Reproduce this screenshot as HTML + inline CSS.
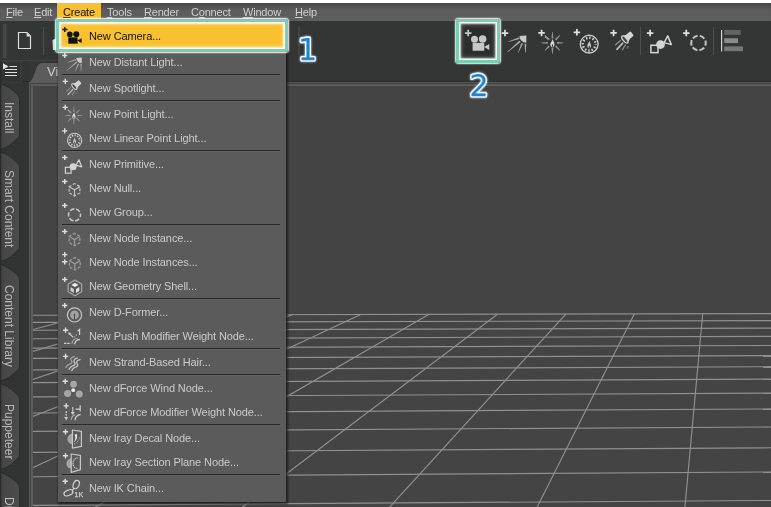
<!DOCTYPE html>
<html><head><meta charset="utf-8"><title>Create menu</title>
<style>
html,body{margin:0;padding:0;}
body{width:771px;height:507px;overflow:hidden;position:relative;background:#444444;font-family:"Liberation Sans",Arial,sans-serif;font-size:11px;}
div{position:absolute;box-sizing:border-box;}
svg{position:absolute;left:0;top:0;}
#topstrip{left:0;top:0;width:771px;height:3px;background:#fff;}
#menubar{left:0;top:3px;width:771px;height:18px;background:linear-gradient(#474747,#5c5c5c 40%,#5e5e5e);}
.mb{top:5px;height:14px;line-height:14px;color:#cfcfcf;white-space:nowrap;letter-spacing:-0.2px;}
.mb u{text-decoration:underline;text-underline-offset:1px;}
#createhl{left:57px;top:3px;width:44px;height:18px;background:#f9c12f;}
#toolbar{left:0;top:21px;width:771px;height:60px;background:#343636;}
#tbline1{left:0;top:81px;width:771px;height:1px;background:#2b2c2c;}
#tbline2{left:29px;top:82px;width:771px;height:1px;background:#585858;}
#tbline3{left:30px;top:83px;width:771px;height:1px;background:#404040;}
#leftstrip{left:0;top:61px;width:29px;height:446px;background:#323333;}
#popup{left:58px;top:21px;width:227.5px;height:481px;background:#5b5b5b;box-shadow:1px 1px 2px 1px rgba(20,20,20,.75);}
.mi{left:89px;width:190px;height:24px;line-height:27px;letter-spacing:-0.1px;color:#cacaca;white-space:nowrap;}
.mi.hl{color:#111;}
.sep{left:62px;width:218px;height:2px;margin-top:1px;background:linear-gradient(#272727 50%,#626262 50%);}
#hl{left:60px;top:23px;width:224px;height:25px;background:#f9c12f;}
.gbox{border:3.7px solid #76d0b1;border-radius:2.5px;box-shadow:0 0 1.6px 0.9px #fff, inset 0 0 0 1.3px rgba(255,255,255,.92), inset 0 0 2px 2px rgba(255,255,255,.7), inset 0 0 5px 2px rgba(255,255,255,.28);}
.vt{left:16px;height:14px;line-height:14px;font-size:12px;color:#b8b8b8;white-space:nowrap;transform-origin:0 0;transform:rotate(90deg);}
</style></head><body><div id="root" style="left:0;top:0;width:771px;height:507px;will-change:transform">
<div id="topstrip"></div>
<div id="menubar"></div>
<div id="createhl"></div>
<div class="mb" style="left:6px"><u>F</u>ile</div>
<div class="mb" style="left:34px"><u>E</u>dit</div>
<div class="mb" style="left:63px;color:#111"><u>C</u>reate</div>
<div class="mb" style="left:107px"><u>T</u>ools</div>
<div class="mb" style="left:144px"><u>R</u>ender</div>
<div class="mb" style="left:191px">C<u>o</u>nnect</div>
<div class="mb" style="left:243px"><u>W</u>indow</div>
<div class="mb" style="left:295px"><u>H</u>elp</div>
<div id="toolbar"></div>
<div id="leftstrip"></div>
<div id="tbline1"></div><div id="tbline2"></div><div id="tbline3"></div>
<svg width="771" height="507" viewBox="0 0 771 507">
<defs>
<clipPath id="vp"><rect x="33" y="86" width="738" height="421"/></clipPath>
<linearGradient id="tabg" x1="0" x2="1" y1="0" y2="0"><stop offset="0" stop-color="#3c3c3c"/><stop offset="0.15" stop-color="#464646"/><stop offset="1" stop-color="#4c4c4c"/></linearGradient>
</defs>
<!-- viewport pane borders -->
<rect x="29" y="82" width="1" height="507" fill="#585858"/>
<rect x="30" y="83" width="1" height="507" fill="#444"/>
<rect x="31" y="84" width="2" height="507" fill="#5b5b5b"/>
<rect x="31" y="84" width="771" height="2" fill="#5b5b5b"/>
<g clip-path="url(#vp)" stroke="#909090" stroke-width="1.15" fill="none"><line x1="20.00" y1="315.25" x2="780.00" y2="313.60"/><line x1="20.00" y1="322.43" x2="780.00" y2="320.54"/><line x1="20.00" y1="330.25" x2="780.00" y2="328.10"/><line x1="20.00" y1="338.80" x2="780.00" y2="336.38"/><line x1="20.00" y1="348.17" x2="780.00" y2="345.47"/><line x1="20.00" y1="358.50" x2="780.00" y2="355.52"/><line x1="20.00" y1="369.95" x2="780.00" y2="366.66"/><line x1="20.00" y1="382.70" x2="780.00" y2="379.11"/><line x1="20.00" y1="396.98" x2="780.00" y2="393.09"/><line x1="20.00" y1="413.11" x2="780.00" y2="408.90"/><line x1="20.00" y1="431.44" x2="780.00" y2="426.95"/><line x1="20.00" y1="452.47" x2="780.00" y2="447.72"/><line x1="20.00" y1="476.84" x2="780.00" y2="471.91"/><line x1="20.00" y1="505.43" x2="780.00" y2="500.40"/><line x1="18.70" y1="315.25" x2="-834.85" y2="520.00"/><line x1="87.10" y1="315.10" x2="-684.21" y2="520.00"/><line x1="155.50" y1="314.95" x2="-533.29" y2="520.00"/><line x1="223.90" y1="314.80" x2="-382.11" y2="520.00"/><line x1="292.30" y1="314.66" x2="-230.66" y2="520.00"/><line x1="360.70" y1="314.51" x2="-78.94" y2="520.00"/><line x1="429.10" y1="314.36" x2="73.05" y2="520.00"/><line x1="497.50" y1="314.21" x2="225.31" y2="520.00"/><line x1="565.90" y1="314.06" x2="377.84" y2="520.00"/><line x1="634.30" y1="313.91" x2="530.65" y2="520.00"/><line x1="702.70" y1="313.76" x2="683.72" y2="520.00"/><line x1="771.10" y1="313.62" x2="837.07" y2="520.00"/><line x1="839.50" y1="313.47" x2="990.70" y2="520.00"/></g>
<!-- toolbar items -->
<rect x="3" y="24" width="3.5" height="34" fill="#454646"/>
<path d="M18.5 32.5H27L30.5 36V48.5H18.5Z" fill="none" stroke="#dcdcdc" stroke-width="1.2"/><path d="M26.6 32.6V36.4H30.4Z" fill="#dcdcdc"/>
<rect x="43" y="27" width="1" height="28" fill="#4e4f4f"/>
<path d="M52.5 40L56 38.6V50H53Z" fill="#d8d8d8"/>
<rect x="298.5" y="27" width="1" height="28" fill="#4e4f4f"/>
<rect x="640" y="27" width="1" height="28" fill="#4e4f4f"/>
<rect x="713" y="27" width="1" height="28" fill="#4e4f4f"/>
<rect x="721" y="30" width="1.2" height="21.5" fill="#d0d0d0"/>
<rect x="724.2" y="30" width="16.4" height="4.8" fill="#646464"/>
<rect x="724.2" y="38.3" width="13.8" height="4.8" fill="#8a8a8a"/>
<rect x="724.2" y="46.4" width="18.8" height="4.8" fill="#777"/>
<rect x="460" y="23" width="37" height="37" fill="#2c2d2d"/>
<g transform="translate(463.5 24.9) scale(1.25)"><path d="M1.15 6.5H6.35M3.75 3.9V9.1" stroke="#c6c6c6" stroke-width="1.4" fill="none"/><g fill="#c6c6c6"><circle cx="8.8" cy="11.4" r="2.8"/><circle cx="15.3" cy="11.3" r="3"/><rect x="7.3" y="14.4" width="9.3" height="6.3"/><path d="M16.4 17.6L20.6 15.3V20.1Z"/></g></g><g transform="translate(500.3 24.9) scale(1.25)"><path d="M1.15 6.5H6.35M3.75 3.9V9.1" stroke="#e0e0e0" stroke-width="1.4" fill="none"/><path d="M15.3 8.9L20.8 8.5V14.2A5.4 5.4 0 0 1 15.3 8.9Z" fill="#c8c8c8"/><path d="M14.97 9.89L15.43 11.31L6.46 13.68L6.34 13.32ZM15.28 12.39L16.32 13.61L5.83 21.85L5.57 21.55ZM16.81 14.41L18.19 14.99L14.47 22.37L14.13 22.23ZM19.35 15.00L20.85 15.00L20.29 22.30L19.91 22.30Z" fill="#a6a6a6"/></g><g transform="translate(536.3 24.9) scale(1.25)"><path d="M1.6 6.4H6.800000000000001M4.2 3.8000000000000003V9.0" stroke="#e0e0e0" stroke-width="1.4" fill="none"/><path d="M7 9.2L9.4 11.4" stroke="#c8c8c8" stroke-width="1.1" stroke-dasharray="1.2 0.7"/><path d="M16.50 15.15L16.50 13.65L21.60 14.15L21.60 14.65ZM14.92 17.48L15.98 16.42L19.16 20.30L18.80 20.66ZM12.15 18.00L13.65 18.00L13.15 23.10L12.65 23.10ZM9.82 16.42L10.88 17.48L7.00 20.66L6.64 20.30ZM9.30 13.65L9.30 15.15L4.20 14.65L4.20 14.15ZM10.88 11.32L9.82 12.38L6.64 8.50L7.00 8.14ZM13.65 10.80L12.15 10.80L12.65 5.70L13.15 5.70ZM15.98 12.38L14.92 11.32L18.80 8.14L19.16 8.50Z" fill="#959595"/><path transform="translate(12.9 14.5) scale(0.76 0.95)" d="M0.3 -3.4C0.6 -1.8 2.2 -0.6 2.2 1.2C2.2 2.6 1.2 3.4 0 3.4C-1.3 3.4 -2.2 2.5 -2.2 1.2C-2.2 -0.6 -0.2 -1.6 0.3 -3.4ZM0.1 0.6C-0.5 1.4 -0.7 1.9 -0.7 2.4C-0.7 2.9 -0.3 3.2 0.1 3.2C0.6 3.2 0.9 2.8 0.9 2.4C0.9 1.8 0.4 1.4 0.1 0.6Z" fill="#d8d8d8" fill-rule="evenodd"/></g><g transform="translate(572.2 24.9) scale(1.25)"><path d="M1.15 5.9H6.35M3.75 3.3000000000000003V8.5" stroke="#e0e0e0" stroke-width="1.4" fill="none"/><circle cx="13.6" cy="15.4" r="7.1" fill="none" stroke="#c8c8c8" stroke-width="1.1"/><circle cx="13.6" cy="15.4" r="5.1" fill="none" stroke="#d0d0d0" stroke-width="1.9" stroke-dasharray="1.2 1.47" stroke-dashoffset="0.6"/><path transform="translate(13.6 15.700000000000001) scale(0.7040000000000001 0.88)" d="M0.3 -3.4C0.6 -1.8 2.2 -0.6 2.2 1.2C2.2 2.6 1.2 3.4 0 3.4C-1.3 3.4 -2.2 2.5 -2.2 1.2C-2.2 -0.6 -0.2 -1.6 0.3 -3.4ZM0.1 0.6C-0.5 1.4 -0.7 1.9 -0.7 2.4C-0.7 2.9 -0.3 3.2 0.1 3.2C0.6 3.2 0.9 2.8 0.9 2.4C0.9 1.8 0.4 1.4 0.1 0.6Z" fill="#c4c4c4" fill-rule="evenodd"/></g><g transform="translate(608.2 24.9) scale(1.25)"><path d="M1.6999999999999997 6.4H6.9M4.3 3.8000000000000003V9.0" stroke="#e0e0e0" stroke-width="1.4" fill="none"/><g transform="translate(13.6 11.4) rotate(-40)"><path d="M-0.6 -4C1.4 -2.8 2.6 -2.3 3.8 -2.3H6.2Q7.2 -2.3 7.2 -1.3V1.3Q7.2 2.3 6.2 2.3H3.8C2.6 2.3 1.4 2.8 -0.6 4Z" fill="#d4d4d4"/><ellipse cx="-0.4" cy="0" rx="1.5" ry="3.5" fill="#444" stroke="#d4d4d4" stroke-width="1"/></g><g stroke-linecap="round"><path d="M9.6 12.6L5.8 16" stroke="#8a8a8a" stroke-width="1.1"/><path d="M11.6 14.6L7 19.6" stroke="#c0c0c0" stroke-width="1.3"/><path d="M13.8 16L11.4 19.8" stroke="#8a8a8a" stroke-width="1.1"/><path d="M16 17.2L15.2 18.6" stroke="#777" stroke-width="1"/></g></g><g transform="translate(645.4 24.9) scale(1.25)"><path d="M1.15 6.5H6.35M3.75 3.9V9.1" stroke="#e0e0e0" stroke-width="1.4" fill="none"/><rect x="4.4" y="16.3" width="5.7" height="5.9" fill="none" stroke="#d4d4d4" stroke-width="1.2"/><path d="M15 14.2L17.9 8.8L20.7 15.8Z" fill="none" stroke="#d4d4d4" stroke-width="1.2" stroke-linejoin="round"/><circle cx="12.1" cy="15.7" r="3.5" fill="#d4d4d4"/></g><g transform="translate(681.6 24.9) scale(1.25)"><path d="M1.15 6.5H6.35M3.75 3.9V9.1" stroke="#e0e0e0" stroke-width="1.4" fill="none"/><circle cx="13.5" cy="14.5" r="5.8" fill="none" stroke="#c4c4c4" stroke-width="1.6" stroke-dasharray="4.350 1.724" stroke-dashoffset="2.175"/></g>
<!-- tab bar row -->
<rect x="0" y="60" width="240" height="1" fill="#414242"/>
<rect x="0" y="61" width="21" height="21" fill="none" stroke="#3f4040" stroke-width="1"/>
<path d="M3 63.2L8.6 66.4L3 69.6Z" fill="#e0e0e0"/>
<path d="M9.5 66.5H17M5 69.5H17M5 72.5H17M5 75.5H17" stroke="#e0e0e0" stroke-width="1"/>
<path d="M29 83C33 80 34 74 36.5 68C38 64.5 39.5 63 43 63H240V83Z" fill="#5c5c5c"/>
<!-- left tabs -->
<path d="M0 83.5C6 85.5 11 88.5 14 91.5C17 94.5 19.5 95.5 19.5 99.5V133.7C19.5 137.7 17 138.7 14 141.7C11 144.7 6 147.7 0 149.7Z" fill="url(#tabg)" stroke="#2a2a2a" stroke-width="1"/><path d="M0 151.7C6 153.7 11 156.7 14 159.7C17 162.7 19.5 163.7 19.5 167.7V246C19.5 250 17 251 14 254C11 257 6 260 0 262Z" fill="url(#tabg)" stroke="#2a2a2a" stroke-width="1"/><path d="M0 264C6 266 11 269 14 272C17 275 19.5 276 19.5 280V365.5C19.5 369.5 17 370.5 14 373.5C11 376.5 6 379.5 0 381.5Z" fill="url(#tabg)" stroke="#2a2a2a" stroke-width="1"/><path d="M0 383.5C6 385.5 11 388.5 14 391.5C17 394.5 19.5 395.5 19.5 399.5V454C19.5 458 17 459 14 462C11 465 6 468 0 470Z" fill="url(#tabg)" stroke="#2a2a2a" stroke-width="1"/><path d="M0 472C6 474 11 477 14 480C17 483 19.5 484 19.5 488V584C19.5 588 17 589 14 592C11 595 6 598 0 600Z" fill="url(#tabg)" stroke="#2a2a2a" stroke-width="1"/>
<rect x="0" y="61" width="1.2" height="446" fill="#2a2a2a"/>
</svg>
<div style="left:47px;top:64px;font-size:13px;line-height:16px;color:#d0d0d0">Viewport</div>
<div class="vt" style="top:101.5px">Install</div><div class="vt" style="top:169.8px">Smart Content</div><div class="vt" style="top:285.3px">Content Library</div><div class="vt" style="top:404px">Puppeteer</div><div class="vt" style="top:496.5px">Draw Settings</div>
<div id="popup"></div>
<div id="hl"></div>
<div class="mi hl" style="top:23px">New Camera...</div><div class="mi" style="top:49px">New Distant Light...</div><div class="sep" style="top:73px"></div><div class="mi" style="top:75px">New Spotlight...</div><div class="sep" style="top:99px"></div><div class="mi" style="top:101px">New Point Light...</div><div class="mi" style="top:125px">New Linear Point Light...</div><div class="sep" style="top:149px"></div><div class="mi" style="top:151px">New Primitive...</div><div class="mi" style="top:175px">New Null...</div><div class="mi" style="top:199px">New Group...</div><div class="sep" style="top:223px"></div><div class="mi" style="top:225px">New Node Instance...</div><div class="mi" style="top:249px">New Node Instances...</div><div class="mi" style="top:273px">New Geometry Shell...</div><div class="sep" style="top:297px"></div><div class="mi" style="top:299px">New D-Former...</div><div class="mi" style="top:323px">New Push Modifier Weight Node...</div><div class="sep" style="top:347px"></div><div class="mi" style="top:349px">New Strand-Based Hair...</div><div class="sep" style="top:373px"></div><div class="mi" style="top:375px">New dForce Wind Node...</div><div class="mi" style="top:399px">New dForce Modifier Weight Node...</div><div class="sep" style="top:423px"></div><div class="mi" style="top:425px">New Iray Decal Node...</div><div class="mi" style="top:449px">New Iray Section Plane Node...</div><div class="sep" style="top:473px"></div><div class="mi" style="top:475px">New IK Chain...</div>
<svg width="771" height="507" viewBox="0 0 771 507">
<g transform="translate(61 23)"><path d="M1.15 6.5H6.35M3.75 3.9V9.1" stroke="#111" stroke-width="1.4" fill="none"/><g fill="#111"><circle cx="8.8" cy="11.4" r="2.8"/><circle cx="15.3" cy="11.3" r="3"/><rect x="7.3" y="14.4" width="9.3" height="6.3"/><path d="M16.4 17.6L20.6 15.3V20.1Z"/></g></g><g transform="translate(61 49)"><path d="M1.15 6.5H6.35M3.75 3.9V9.1" stroke="#e0e0e0" stroke-width="1.4" fill="none"/><path d="M15.3 8.9L20.8 8.5V14.2A5.4 5.4 0 0 1 15.3 8.9Z" fill="#c8c8c8"/><path d="M14.97 9.89L15.43 11.31L6.46 13.68L6.34 13.32ZM15.28 12.39L16.32 13.61L5.83 21.85L5.57 21.55ZM16.81 14.41L18.19 14.99L14.47 22.37L14.13 22.23ZM19.35 15.00L20.85 15.00L20.29 22.30L19.91 22.30Z" fill="#a6a6a6"/></g><g transform="translate(61 75)"><path d="M1.6999999999999997 6.4H6.9M4.3 3.8000000000000003V9.0" stroke="#e0e0e0" stroke-width="1.4" fill="none"/><g transform="translate(13.6 11.4) rotate(-40)"><path d="M-0.6 -4C1.4 -2.8 2.6 -2.3 3.8 -2.3H6.2Q7.2 -2.3 7.2 -1.3V1.3Q7.2 2.3 6.2 2.3H3.8C2.6 2.3 1.4 2.8 -0.6 4Z" fill="#d4d4d4"/><ellipse cx="-0.4" cy="0" rx="1.5" ry="3.5" fill="#444" stroke="#d4d4d4" stroke-width="1"/></g><g stroke-linecap="round"><path d="M9.6 12.6L5.8 16" stroke="#8a8a8a" stroke-width="1.1"/><path d="M11.6 14.6L7 19.6" stroke="#c0c0c0" stroke-width="1.3"/><path d="M13.8 16L11.4 19.8" stroke="#8a8a8a" stroke-width="1.1"/><path d="M16 17.2L15.2 18.6" stroke="#777" stroke-width="1"/></g></g><g transform="translate(61 101)"><path d="M1.6 6.4H6.800000000000001M4.2 3.8000000000000003V9.0" stroke="#e0e0e0" stroke-width="1.4" fill="none"/><path d="M7 9.2L9.4 11.4" stroke="#c8c8c8" stroke-width="1.1" stroke-dasharray="1.2 0.7"/><path d="M16.50 15.15L16.50 13.65L21.60 14.15L21.60 14.65ZM14.92 17.48L15.98 16.42L19.16 20.30L18.80 20.66ZM12.15 18.00L13.65 18.00L13.15 23.10L12.65 23.10ZM9.82 16.42L10.88 17.48L7.00 20.66L6.64 20.30ZM9.30 13.65L9.30 15.15L4.20 14.65L4.20 14.15ZM10.88 11.32L9.82 12.38L6.64 8.50L7.00 8.14ZM13.65 10.80L12.15 10.80L12.65 5.70L13.15 5.70ZM15.98 12.38L14.92 11.32L18.80 8.14L19.16 8.50Z" fill="#959595"/><path transform="translate(12.9 14.5) scale(0.76 0.95)" d="M0.3 -3.4C0.6 -1.8 2.2 -0.6 2.2 1.2C2.2 2.6 1.2 3.4 0 3.4C-1.3 3.4 -2.2 2.5 -2.2 1.2C-2.2 -0.6 -0.2 -1.6 0.3 -3.4ZM0.1 0.6C-0.5 1.4 -0.7 1.9 -0.7 2.4C-0.7 2.9 -0.3 3.2 0.1 3.2C0.6 3.2 0.9 2.8 0.9 2.4C0.9 1.8 0.4 1.4 0.1 0.6Z" fill="#d8d8d8" fill-rule="evenodd"/></g><g transform="translate(61 125)"><path d="M1.15 5.9H6.35M3.75 3.3000000000000003V8.5" stroke="#e0e0e0" stroke-width="1.4" fill="none"/><circle cx="13.6" cy="15.4" r="7.1" fill="none" stroke="#c8c8c8" stroke-width="1.1"/><circle cx="13.6" cy="15.4" r="5.1" fill="none" stroke="#d0d0d0" stroke-width="1.9" stroke-dasharray="1.2 1.47" stroke-dashoffset="0.6"/><path transform="translate(13.6 15.700000000000001) scale(0.7040000000000001 0.88)" d="M0.3 -3.4C0.6 -1.8 2.2 -0.6 2.2 1.2C2.2 2.6 1.2 3.4 0 3.4C-1.3 3.4 -2.2 2.5 -2.2 1.2C-2.2 -0.6 -0.2 -1.6 0.3 -3.4ZM0.1 0.6C-0.5 1.4 -0.7 1.9 -0.7 2.4C-0.7 2.9 -0.3 3.2 0.1 3.2C0.6 3.2 0.9 2.8 0.9 2.4C0.9 1.8 0.4 1.4 0.1 0.6Z" fill="#c4c4c4" fill-rule="evenodd"/></g><g transform="translate(61 151)"><path d="M1.15 6.5H6.35M3.75 3.9V9.1" stroke="#e0e0e0" stroke-width="1.4" fill="none"/><rect x="4.4" y="16.3" width="5.7" height="5.9" fill="none" stroke="#d4d4d4" stroke-width="1.2"/><path d="M15 14.2L17.9 8.8L20.7 15.8Z" fill="none" stroke="#d4d4d4" stroke-width="1.2" stroke-linejoin="round"/><circle cx="12.1" cy="15.7" r="3.5" fill="#d4d4d4"/></g><g transform="translate(61 175)"><path d="M1.15 6.5H6.35M3.75 3.9V9.1" stroke="#e0e0e0" stroke-width="1.4" fill="none"/><path d="M13.5 8.600000000000001L18.9 11.700000000000001V17.900000000000002L13.5 21.0L8.1 17.900000000000002V11.700000000000001Z" fill="none" stroke="#c4c4c4" stroke-width="1.2" stroke-dasharray="3 1.6" stroke-dashoffset="1.5"/><path d="M13.5 14.8V21.0M13.5 14.8L8.1 11.700000000000001M13.5 14.8L18.9 11.700000000000001" fill="none" stroke="#c4c4c4" stroke-width="1.2"/></g><g transform="translate(61 199)"><path d="M1.15 6.5H6.35M3.75 3.9V9.1" stroke="#e0e0e0" stroke-width="1.4" fill="none"/><circle cx="13.5" cy="15.9" r="6" fill="none" stroke="#c4c4c4" stroke-width="1.6" stroke-dasharray="4.500 1.783" stroke-dashoffset="2.250"/></g><g transform="translate(61 225)"><path d="M1.15 6.5H6.35M3.75 3.9V9.1" stroke="#e0e0e0" stroke-width="1.4" fill="none"/><path d="M13.5 8.399999999999999L18.9 11.5V17.7L13.5 20.8L8.1 17.7V11.5Z" fill="none" stroke="#969696" stroke-width="1.35" stroke-dasharray="3 1.6" stroke-dashoffset="1.5"/><path d="M13.5 14.6V20.8M13.5 14.6L8.1 11.5M13.5 14.6L18.9 11.5" fill="none" stroke="#969696" stroke-width="1.35"/></g><g transform="translate(61 249)"><path d="M1.15 5.6H6.35M3.75 2.9999999999999996V8.2" stroke="#e0e0e0" stroke-width="1.4" fill="none"/><path d="M1.15 12.8H6.35M3.75 10.200000000000001V15.4" stroke="#e0e0e0" stroke-width="1.4" fill="none"/><path d="M13.8 8.600000000000001L19.200000000000003 11.700000000000001V17.900000000000002L13.8 21.0L8.4 17.900000000000002V11.700000000000001Z" fill="none" stroke="#969696" stroke-width="1.35" stroke-dasharray="3 1.6" stroke-dashoffset="1.5"/><path d="M13.8 14.8V21.0M13.8 14.8L8.4 11.700000000000001M13.8 14.8L19.200000000000003 11.700000000000001" fill="none" stroke="#969696" stroke-width="1.35"/></g><g transform="translate(61 273)"><path d="M1.15 6.5H6.35M3.75 3.9V9.1" stroke="#e0e0e0" stroke-width="1.4" fill="none"/><path d="M13.9 7.1000000000000005L20.6 11.0V18.8L13.9 22.7L7.2 18.8V11.0Z" fill="#555" stroke="#a4a4a4" stroke-width="1.3" stroke-linejoin="round"/><path d="M13.9 9.7L17.5 11.9L13.9 14.0L10.3 11.9Z" fill="#ececec"/><path d="M9.5 14.0L12.8 16.0V19.9L9.5 17.9Z" fill="#cfcfcf"/><path d="M18.3 14.0L15.0 16.0V19.9L18.3 17.9Z" fill="#dedede"/></g><g transform="translate(61 299)"><path d="M1.15 6.5H6.35M3.75 3.9V9.1" stroke="#e0e0e0" stroke-width="1.4" fill="none"/><circle cx="13.5" cy="15.9" r="7.1" fill="none" stroke="#c4c4c4" stroke-width="1.2"/><circle cx="13.5" cy="15.9" r="4.3" fill="#a4a4a4"/><path d="M13.5 15.9V20.3" stroke="#4a4a4a" stroke-width="1.1"/><circle cx="13.5" cy="15.700000000000001" r="0.9" fill="#4a4a4a"/></g><g transform="translate(61 323)"><path d="M1.9999999999999996 7.2H7.199999999999999M4.6 4.6V9.8" stroke="#e0e0e0" stroke-width="1.4" fill="none"/><g transform="translate(0 1)"><path d="M8.4 9.6L12.2 13.4" stroke="#d0d0d0" stroke-width="1.1"/><path d="M7.2 8.2L10.2 9L8 11.2Z" fill="#d0d0d0"/><path d="M16.6 7.2L18.6 5.4V11" stroke="#d0d0d0" stroke-width="1.2" fill="none"/><path d="M13 13.4L16.6 9.8" stroke="#a8a8a8" stroke-width="1.1" stroke-dasharray="1.6 1"/><path d="M3 19.4H9.6" stroke="#d0d0d0" stroke-width="1.2" stroke-dasharray="2.4 0.8"/><path d="M11 20C11 17 13 14.6 16.6 14.2" stroke="#a8a8a8" stroke-width="1.1" fill="none"/><path d="M13.6 20.4C13.8 17.8 15.4 15.8 19 15.4" stroke="#d0d0d0" stroke-width="1.3" fill="none"/></g></g><g transform="translate(61 349)"><path d="M1.9999999999999996 7.4H7.199999999999999M4.6 4.800000000000001V10.0" stroke="#e0e0e0" stroke-width="1.4" fill="none"/><path transform="translate(4.9 7.6)" d="M8.4 0C5.4 0.6 4 2.4 5.4 4C6.8 5.6 6 7 3.8 7.6C1.6 8.2 0.8 9.4 0 11" stroke="#a8a8a8" stroke-width="1.2" fill="none" stroke-linecap="round"/><path transform="translate(8.0 9.2)" d="M8.4 0C5.4 0.6 4 2.4 5.4 4C6.8 5.6 6 7 3.8 7.6C1.6 8.2 0.8 9.4 0 11" stroke="#c8c8c8" stroke-width="1.3" fill="none" stroke-linecap="round"/><path transform="translate(10.7 10.6)" d="M8.4 0C5.4 0.6 4 2.4 5.4 4C6.8 5.6 6 7 3.8 7.6C1.6 8.2 0.8 9.4 0 11" stroke="#c8c8c8" stroke-width="1.3" fill="none" stroke-linecap="round"/></g><g transform="translate(61 375)"><path d="M1.6 6.3H6.800000000000001M4.2 3.6999999999999997V8.9" stroke="#e0e0e0" stroke-width="1.4" fill="none"/><circle cx="12.6" cy="9.2" r="3.4" fill="#a6a6a6"/><circle cx="6.6" cy="18.4" r="3.5" fill="#a6a6a6"/><circle cx="18.3" cy="19" r="3.5" fill="#a6a6a6"/><circle cx="12.2" cy="15.2" r="1.9" fill="#ececec"/></g><g transform="translate(61 399)"><path d="M2.6 6.9H7.800000000000001M5.2 4.300000000000001V9.5" stroke="#e0e0e0" stroke-width="1.4" fill="none"/><g transform="translate(0.6 0.9)"><path d="M4.6 11V17.6" stroke="#d0d0d0" stroke-width="1.2" stroke-dasharray="2 0.9"/><path d="M2.6 17L4.6 20.4L6.6 17Z" fill="#d0d0d0"/><path d="M11.2 7V13" stroke="#d0d0d0" stroke-width="1.1"/><path d="M9.2 12L11.2 15.2L13.2 12Z" fill="#d0d0d0"/><path d="M18.6 5.4V11.6M14 9.2H18.6" stroke="#d0d0d0" stroke-width="1.2" fill="none"/><path d="M9.6 20C9.8 17.4 11.4 15.6 13.6 15" stroke="#a8a8a8" stroke-width="1.1" fill="none"/><path d="M13.4 20.4C13.6 17.4 15.4 15 19 14.4" stroke="#d0d0d0" stroke-width="1.3" fill="none"/></g></g><g transform="translate(61 425)"><path d="M1.9 6.8H7.1M4.5 4.199999999999999V9.4" stroke="#e0e0e0" stroke-width="1.4" fill="none"/><path d="M11.6 8.6A5.3 5.3 0 0 0 11.6 19.2Z" fill="#a4a4a4"/><path d="M11.4 5L20.4 6.4V21.4L11.4 23.2Z" fill="#5b5b5b" fill-opacity="0.55" stroke="#c6c6c6" stroke-width="1.25" stroke-linejoin="round"/><path d="M15.6 8.8C16.8 11.8 15.8 15.6 12.8 17.2C14.6 15 14.8 11.8 13.6 9.8Z" fill="#e8e8e8"/><path d="M13 19C16.2 18.2 18.2 15.4 18.4 11.4" stroke="#c6c6c6" stroke-width="1" fill="none" stroke-dasharray="0.9 1.1"/></g><g transform="translate(61 449)"><path d="M1.9 6.8H7.1M4.5 4.199999999999999V9.4" stroke="#e0e0e0" stroke-width="1.4" fill="none"/><path d="M10.4 9.6A5 5 0 0 0 10.4 19.6Z" fill="#a4a4a4"/><path d="M10.2 5L19.4 6.4V20.6L10.2 23.4Z" fill="#5b5b5b" fill-opacity="0.55" stroke="#c6c6c6" stroke-width="1.25" stroke-linejoin="round"/><path d="M16.6 8.8C13.6 9.4 12 11.8 12 14.4C12 17 13.6 19.2 16.8 19.8" stroke="#e0e0e0" stroke-width="1.3" fill="none" stroke-dasharray="1 0.9"/></g><g transform="translate(61 475)"><path d="M1.6 6.3H6.800000000000001M4.2 3.6999999999999997V8.9" stroke="#e0e0e0" stroke-width="1.4" fill="none"/><ellipse cx="15.2" cy="9.6" rx="2.9" ry="4.3" transform="rotate(24 15.2 9.6)" fill="none" stroke="#d0d0d0" stroke-width="1.2"/><ellipse cx="7.4" cy="17.8" rx="4.7" ry="2.7" transform="rotate(-24 7.4 17.8)" fill="none" stroke="#d0d0d0" stroke-width="1.2"/><path d="M13 12.8C11.6 14.4 10.8 16.2 11.4 18.2" stroke="#d0d0d0" stroke-width="1.2" fill="none"/><text x="13.6" y="21.8" font-family="Liberation Sans, sans-serif" font-size="7" fill="#d0d0d0" stroke="#d0d0d0" stroke-width="0.25">1K</text></g>
<g font-family="DejaVu Sans, sans-serif" font-size="30px" stroke-linejoin="round" text-anchor="middle">
<g fill="#fff" stroke="#fff" stroke-width="3" style="filter:drop-shadow(0 0 0.8px #fff)"><text x="307.5" y="60">1</text><text x="479" y="96">2</text></g>
<g fill="#1b87d9" stroke="#1b87d9" stroke-width="0.25"><text x="307.5" y="60">1</text><text x="479" y="96">2</text></g>
</g>
</svg>
<div class="gbox" style="left:56.4px;top:19.3px;width:232px;height:32.8px"></div>
<div class="gbox" style="left:455.9px;top:19.2px;width:44.4px;height:44.3px"></div>
</div></body></html>
